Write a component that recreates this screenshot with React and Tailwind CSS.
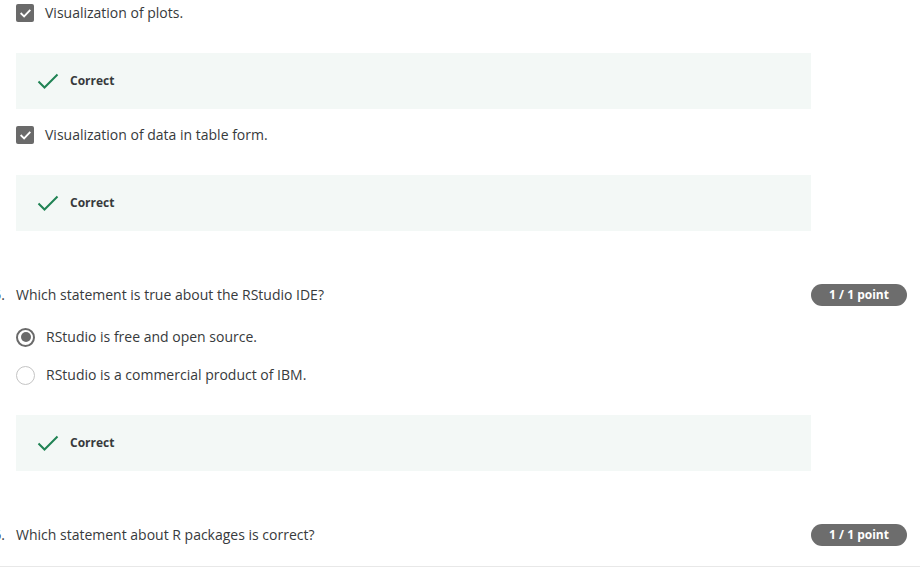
import React from "react";

const font = { fontFamily: '"Open Sans", "Noto Sans", sans-serif' };

function CheckBox() {
  return (
    <span className="flex h-[18px] w-[18px] items-center justify-center rounded-[2px] bg-[#6a6a6a]">
      <svg width="13" height="13" viewBox="0 0 14 14" fill="none">
        <path d="M2.5 7.2l3 3 6-6.4" stroke="#fff" strokeWidth="2" strokeLinecap="square" />
      </svg>
    </span>
  );
}

function Radio({ checked }) {
  return checked ? (
    <span className="flex h-[19px] w-[19px] items-center justify-center rounded-full border-2 border-[#6a6a6a]">
      <span className="h-[10px] w-[10px] rounded-full bg-[#6a6a6a]" />
    </span>
  ) : (
    <span className="h-[19px] w-[19px] rounded-full border-[1.5px] border-[#c4c4c4]" />
  );
}

function Correct({ className }) {
  return (
    <div className={`flex h-[56px] w-[795px] items-center bg-[#f3f8f6] pl-[21px] ${className}`}>
      <svg width="22" height="16" viewBox="0 0 22 16" fill="none">
        <path d="M1.5 8.5l6 6L20.5 1.5" stroke="#1f8354" strokeWidth="2" />
      </svg>
      <span className="ml-[11px] text-[12px] font-bold text-[#373a3c]">Correct</span>
    </div>
  );
}

function OptionRow({ children, className, control }) {
  return (
    <div className={`flex h-[26px] items-center ${className}`}>
      {control}
      <span className="ml-[11px] pb-[2px] text-[14px] text-[#373a3c]">{children}</span>
    </div>
  );
}

function Question({ num, children, className }) {
  return (
    <div className={`flex h-[26px] items-center ${className}`}>
      <span className="-ml-[40px] w-[40px] pb-[2px] pr-[11px] text-right text-[14px] text-[#373a3c]">{num}.</span>
      <span className="flex-1 pb-[2px] text-[14px] text-[#373a3c]">{children}</span>
      <span className="flex h-[22px] w-[96px] items-center justify-center rounded-full bg-[#6d6d6d] text-[12px] font-bold text-white">
        1 / 1 point
      </span>
    </div>
  );
}

export default function App() {
  return (
    <div className="h-[568px] w-[920px] overflow-hidden bg-white" style={font}>
      <div className="pl-[16px] pr-[13px]">
        <OptionRow control={<CheckBox />}>Visualization of plots.</OptionRow>
        <Correct className="mt-[27px]" />
        <OptionRow className="mt-[13px]" control={<CheckBox />}>Visualization of data in table form.</OptionRow>
        <Correct className="mt-[27px]" />
        <Question num={5} className="mt-[51px]">Which statement is true about the RStudio IDE?</Question>
        <OptionRow className="mt-[16px]" control={<Radio checked />}>RStudio is free and open source.</OptionRow>
        <OptionRow className="mt-[12px]" control={<Radio />}>RStudio is a commercial product of IBM.</OptionRow>
        <Correct className="mt-[27px]" />
        <Question num={6} className="mt-[51px]">Which statement about R packages is correct?</Question>
      </div>
      <div className="mt-[18px] border-t border-[#e8e8e8]" />
    </div>
  );
}
